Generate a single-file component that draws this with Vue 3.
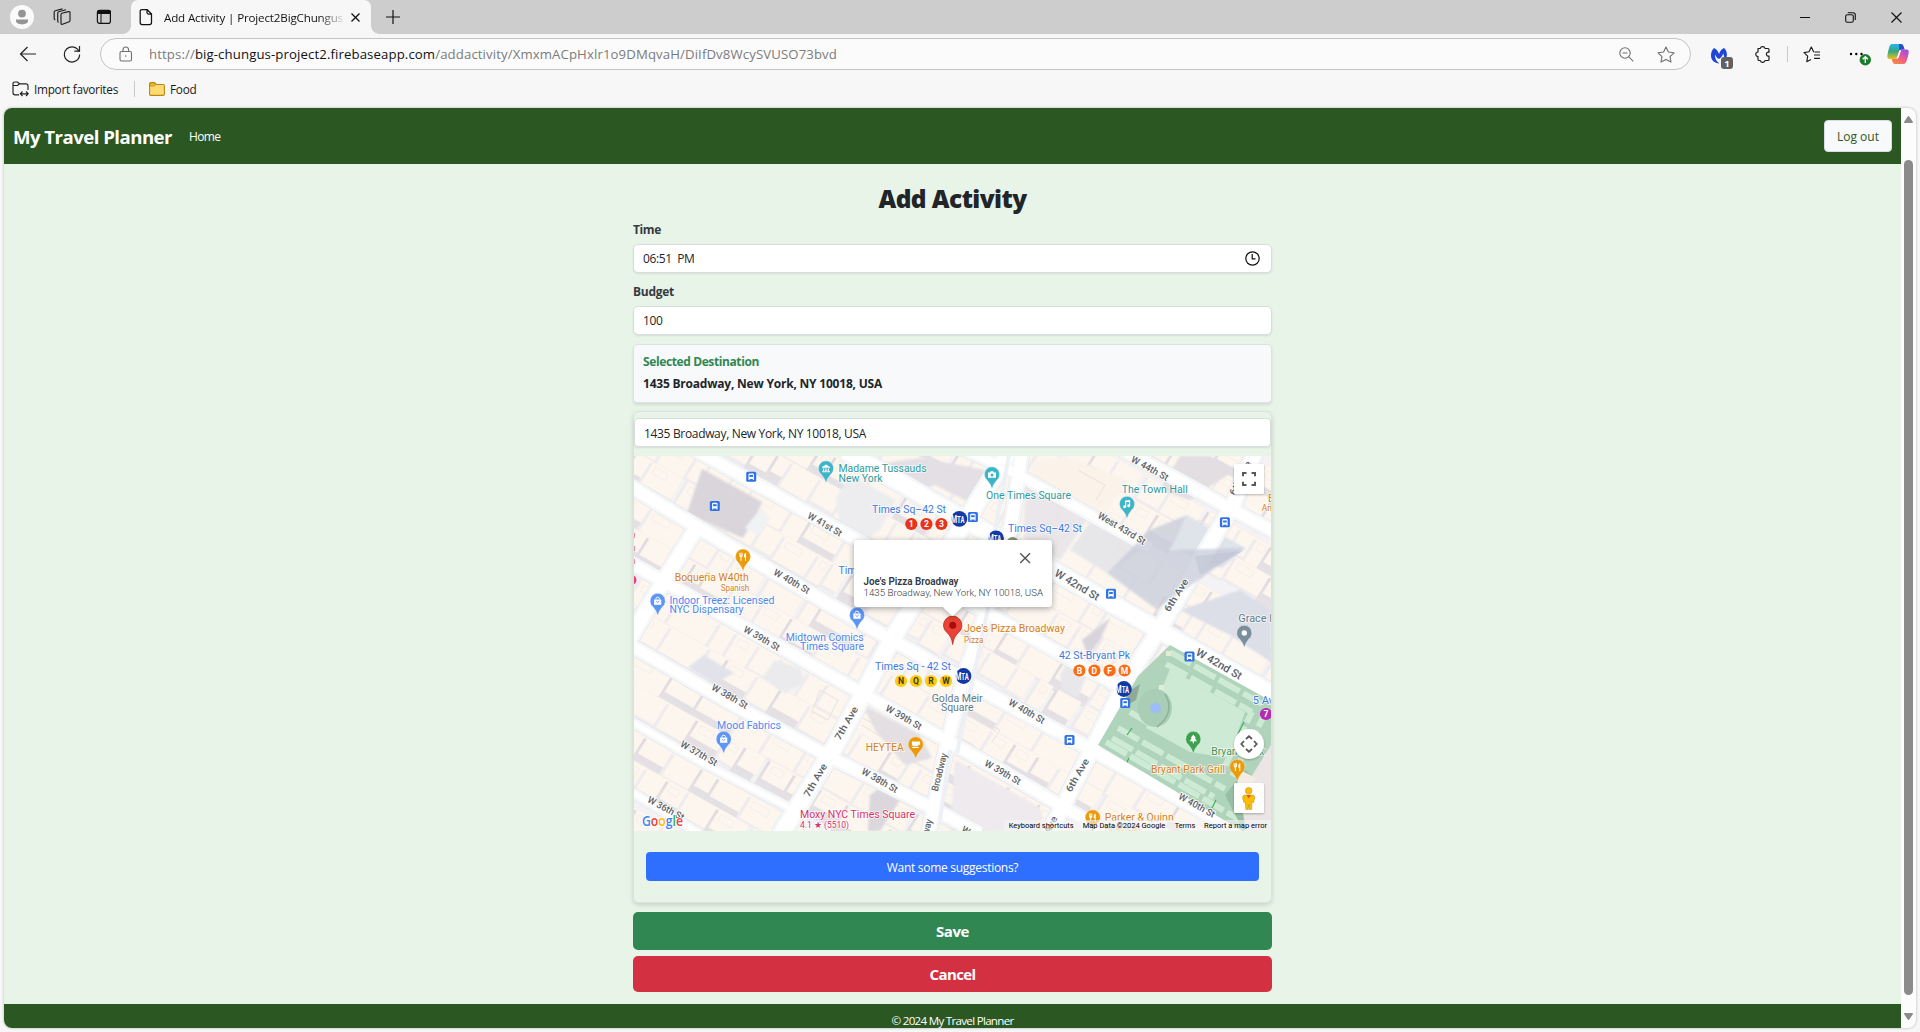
<script setup>
// Sets the tracking of a label so that it fills its design width.
const vFit = {
  mounted(el, { value }) {
    const natural = el.getBoundingClientRect().width
    el.style.letterSpacing = `${(value - natural) / el.textContent.trim().length}px`
  },
}

// Buildings are laid out in street coordinates: u along the streets, v across them.
let seed = 11
const rnd = () => {
  seed = (seed * 16807) % 2147483647
  return seed / 2147483647
}
const buildings = []
for (let strip = -5; strip < 7; strip++) {
  for (let row = 0; row < 2; row++) {
    let u = -60
    while (u < 760) {
      const w = 14 + rnd() * 34
      const h = 24 + rnd() * 4
      buildings.push({ u, v: strip * 67.5 + 8 + row * 27, w, h, tall: rnd() > 0.68, roof: rnd() > 0.55 })
      u += w + (rnd() > 0.85 ? 6 : 0)
    }
  }
}

const roads = [
  { d: 'M690 447L857 540L1120 687', w: 10 },
  { d: 'M625 483L697 527L830 605L967 682L1092 750L1240 832', w: 11 },
  { d: 'M625 560L762 637L860 692L1003 772L1110 834', w: 10 },
  { d: 'M625 642L730 703L830 757L930 807L980 834', w: 10 },
  { d: 'M625 718L699 761L790 808', w: 5 },
  { d: 'M625 788L700 834', w: 5 },
  { d: 'M845 451L1077 584L1290 704', w: 15 },
  { d: 'M960 448L1010 470L1150 548', w: 8 },
  { d: 'M1120 448L1233 510L1290 540', w: 10 },
  { d: 'M697 527L660 587L620 655', w: 13 },
  { d: 'M780 836L837 743L893 637L960 530L1010 450', w: 15 },
  { d: 'M928 836L948 740L966 670L990 600L1012 520L1022 450', w: 11 },
  { d: 'M1048 836L1093 747L1125 683L1167 617L1233 505L1256 450', w: 13 },
]

const streetNames = [
  ['W 41st St', 825, 524, 38, 30], ['W 40th St', 792, 581, 40, 30], ['W 39th St', 762, 638, 40, 30],
  ['W 38th St', 730, 696, 40, 30], ['W 37th St', 699, 753, 41, 30], ['W 36th St', 666, 808, 40, 28],
  ['W 39th St', 904, 717, 40, 30], ['W 38th St', 880, 780, 40, 30], ['W 40th St', 1027, 711, 40, 30],
  ['W 39th St', 1003, 772, 40, 30], ['W 40th St', 1197, 805, 40, 29], ['W 44th St', 1150, 468, 41, 29],
  ['West 43rd St', 1122, 528, 54, 31], ['W 42nd St', 1077, 585, 50, 31], ['W 42nd St', 1219, 664, 51, 30],
  ['7th Ave', 846, 723, 37, -60], ['7th Ave', 815, 780, 37, -60], ['Broadway', 939, 772, 39, -76],
  ['6th Ave', 1176, 595, 37, -58], ['6th Ave', 1077, 775, 37, -60], ['W 38th St', 980, 838, 40, 30],
  ['6th Ave', 1240, 478, 37, -63], ['7th Ave', 1046, 833, 37, -62], ['Broadway', 924, 838, 39, -76],
]

const places = [
  ['Madame Tussauds', 838.5, 471.7, 88, '#2e9aa0'], ['New York', 838.5, 482, 44, '#2e9aa0'],
  ['One Times Square', 986, 498.5, 85, '#2e9aa0'], ['The Town Hall', 1121.7, 493, 66, '#2e9aa0'],
  ['Times Sq–42 St', 872, 512.7, 74, '#3f79e0'], ['Times Sq–42 St', 1008, 532.3, 74, '#3f79e0'],
  ['Times Sq–42 St', 838.5, 573.8, 74, '#3f79e0'], ['Times Sq - 42 St', 875, 669.7, 76, '#3f79e0'],
  ['42 St-Bryant Pk', 1059, 659, 71, '#3f79e0'], ['5 Ave', 1252.7, 703.5, 27, '#3f79e0'],
  ['Boqueria W40th', 674.7, 581, 74, '#d68017'], ['Spanish', 720.7, 590.8, 28.5, '#d68017', 8.5],
  ['Indoor Treez: Licensed', 669.5, 603.7, 105, '#4f87ee'], ['NYC Dispensary', 669.5, 612.7, 74, '#4f87ee'],
  ['Midtown Comics', 785.7, 640.7, 78, '#4f87ee'], ['Times Square', 800, 649.5, 64, '#4f87ee'],
  ["Joe's Pizza Broadway", 964, 632, 101, '#d68017'], ['Pizza', 964, 643, 19.5, '#d68017', 8.5],
  ['Golda Meir', 931.7, 702, 51, '#5f7a88'], ['Square', 941, 711, 32.5, '#5f7a88'],
  ['Grace Building', 1238.3, 621.5, 70, '#5f7a88'], ['Bryant Park', 1211.3, 754.5, 53, '#3f9155'],
  ['Bryant Park Grill', 1151, 773, 74, '#d68017'], ['Parker & Quinn', 1104.7, 821, 69, '#d68017'],
  ['American', 1104.7, 831, 36, '#dfa764', 8.5], ['HEYTEA', 865.7, 751.3, 38, '#d68017'],
  ['Mood Fabrics', 717, 728.7, 64, '#4f87ee'], ['Moxy NYC Times Square', 800, 817.5, 115, '#d6336c'],
  ['4.1 ★ (5510)', 800, 828.3, 49, '#d6336c', 8.5], ['Bar', 1268, 502, 16, '#d68017'], ['American', 1261.7, 511, 36, '#d68017', 8.5],
]

const pins = [
  [826, 468.5, '#3db4c8', 'museum'], [992, 474.5, '#3db4c8', 'camera'], [1127, 504, '#3db4c8', 'music'],
  [743, 556.7, '#eb9a0a', 'fork'], [657.7, 601, '#5c94f7', 'bag'], [857, 615, '#5c94f7', 'bag'],
  [1244.3, 633, '#7a8f9c', 'dot'], [1193.3, 739, '#3da14e', 'tree'], [1237.3, 767, '#eb9a0a', 'fork'],
  [1092.7, 817.5, '#eb9a0a', 'fork'], [915.7, 744.5, '#eb9a0a', 'cup'], [723.7, 739, '#5c94f7', 'bag'],
]

const bullets = [
  ['1', 911.3, 524, '#e8321c', '#fff'], ['2', 926.4, 524, '#e8321c', '#fff'], ['3', 941.4, 524, '#e8321c', '#fff'],
  ['N', 901, 681, '#fccc0a', '#3d3a1c'], ['Q', 916, 681, '#fccc0a', '#3d3a1c'], ['R', 931, 681, '#fccc0a', '#3d3a1c'], ['W', 946, 681, '#fccc0a', '#3d3a1c'],
  ['B', 1079.4, 670.5, '#ff6a13', '#fff'], ['D', 1094.4, 670.5, '#ff6a13', '#fff'], ['F', 1109.6, 670.5, '#ff6a13', '#fff'], ['M', 1124.6, 670.5, '#ff6a13', '#fff'],
  ['7', 1266, 714, '#b52ab5', '#fff'],
]
const buses = [[751.2, 476.7], [714.8, 506], [972.9, 517], [1224.9, 522.3], [1111, 593.8], [1189.5, 656.5], [1125.2, 703], [1069.5, 740]]
const mtas = [[959.3, 518.9], [996, 538.3], [963.5, 676], [1123.9, 689]]
const credits = [['Keyboard shortcuts', 1008.7, 65], ['Map Data ©2024 Google', 1082.7, 82.5], ['Terms', 1174.7, 20.5], ['Report a map error', 1204, 63]]
</script>

<template>
  <div class="browser">
    <div class="tabbar">
      <div class="tools">
        <svg width="24" height="24" viewBox="0 0 24 24"><circle cx="12" cy="12" r="12" fill="#fafafa" /><circle cx="12" cy="8.6" r="3.9" fill="#949494" /><path d="M6 14.5h12v1.6c0 4.4-12 4.4-12 0z" fill="#949494" /></svg>
        <svg width="18" height="18" viewBox="0 0 18 18" fill="none" stroke="#1c1c1c" stroke-width="1.15" stroke-linejoin="round"><path d="M8 6.5Q8 5.6 8.8 5.3L15.5 3.6Q17 3.3 17 4.8V12.6Q17 13.4 16.2 13.7L9.5 16.3Q8 16.7 8 15.3ZM5.6 14.4Q4.7 14.2 4.7 13V5Q4.7 4 5.6 3.7L13 1.7M2.3 12Q1.2 11.8 1.2 10.6V4Q1.2 3 2.2 2.7L9.5.9" /></svg>
        <svg width="16" height="16" viewBox="0 0 16 16"><rect x="1.4" y="1.4" width="13" height="13" rx="2.2" fill="none" stroke="#111" stroke-width="1.2" /><path d="M1 5V3Q1 1 3 1H13Q15 1 15 3V5Z" fill="#111" /><path d="M5 5V14" stroke="#111" stroke-width="1" /></svg>
      </div>
      <div class="tab">
        <svg width="14" height="18" viewBox="0 0 14 18" fill="none" stroke="#111" stroke-width="1.25" stroke-linejoin="round"><path d="M3 1.5H8L12.5 6V14.5Q12.5 16.5 10.5 16.5H3Q1.2 16.5 1.2 14.5V3.3Q1.2 1.5 3 1.5ZM8 1.5V4.5Q8 6 9.5 6H12.5" /></svg>
        <span class="tab-title"><span v-fit="179">Add Activity | Project2BigChungus</span></span>
        <svg width="9" height="9" viewBox="0 0 9 9" stroke="#111" stroke-width="1.3"><path d="M.5.5L8.5 8.5M8.5.5L.5 8.5" /></svg>
      </div>
      <svg class="plus" width="14" height="14" viewBox="0 0 14 14" stroke="#111" stroke-width="1.2"><path d="M7 0V14M0 7H14" /></svg>
      <div class="window-buttons">
        <svg width="10" height="10" viewBox="0 0 10 10" stroke="#111"><path d="M0 5.5H10" /></svg>
        <svg width="11" height="11" viewBox="0 0 11 11" fill="none" stroke="#111" stroke-width="1.1"><rect x=".7" y="2.7" width="7.6" height="7.6" rx="1.5" /><path d="M2.8.7H8Q10.3.7 10.3 3V8" /></svg>
        <svg width="11" height="11" viewBox="0 0 11 11" stroke="#111" stroke-width="1.15"><path d="M.5.5L10.5 10.5M10.5.5L.5 10.5" /></svg>
      </div>
    </div>

    <div class="toolbar">
      <svg class="back" width="18" height="16" viewBox="0 0 18 16" fill="none" stroke="#222" stroke-width="1.2"><path d="M8.5 1L1.5 8L8.5 15M1.5 8H17" /></svg>
      <svg class="reload" width="18" height="18" viewBox="0 0 18 18" fill="none" stroke="#222" stroke-width="1.2"><path d="M16.2 7A7.6 7.6 0 1 0 16.6 9.5M16.5 1V6.2H11.3" /></svg>
      <div class="address">
        <svg width="14" height="16" viewBox="0 0 14 16" fill="none" stroke="#707070" stroke-width="1.1"><rect x="1" y="5.5" width="11.5" height="9.5" rx="1.6" /><path d="M4 5.5V4Q4 1 6.8 1T9.6 4V5.5" /><circle cx="6.8" cy="10" r=".8" fill="#707070" stroke="none" /></svg>
        <span v-fit="688" class="url">https://<b>big-chungus-project2.firebaseapp.com</b>/addactivity/XmxmACpHxlr1o9DMqvaH/DiIfDv8WcySVUSO73bvd</span>
        <svg class="zoomout" width="15" height="15" viewBox="0 0 15 15" fill="none" stroke="#707070" stroke-width="1.1"><circle cx="6" cy="6" r="5.2" /><path d="M3.5 6H8.5M9.8 9.8L14.3 14.3" /></svg>
        <svg width="18" height="17" viewBox="0 0 18 17" fill="none" stroke="#707070" stroke-width="1.1" stroke-linejoin="round"><path d="M9 1L11.4 6L17 6.8L13 10.6L14 16L9 13.4L4 16L5 10.6L1 6.8L6.6 6Z" /></svg>
      </div>
      <svg class="malware" width="24" height="24" viewBox="0 0 24 24"><path d="M4 3C6.4 4 8 6.3 9 9C10 6.3 11.6 4 14 3C17 5.5 17.8 10 16 13.5L14 16.5C14.4 13 14 10.3 13.2 8.6C12.4 11 11 13 9 14C7 13 5.6 11 5 9.2C4.8 13 6 16 9.3 18.4C4.5 18.4 1 15 1 10.5C1 7.5 2 4.8 4 3Z" fill="#1e45d8" /><rect x="11" y="12" width="12" height="12" rx="3" fill="#616161" /><text x="17" y="21.5" text-anchor="middle" font-size="9.5" font-weight="700" fill="#fff">1</text></svg>
      <svg class="puzzle" width="16" height="18" viewBox="0 0 16 18" fill="none" stroke="#1c1c1c" stroke-width="1.2" stroke-linejoin="round"><path d="M3 3.5H5.3A2.4 2.4 0 0 1 10 3.5H13Q14 3.5 14 4.5V7.2A2 2 0 1 0 14 11V14.5Q14 15.5 13 15.5H10A2.4 2.4 0 0 1 5.3 15.5H4Q3 15.5 3 14.5V11.5A2.2 2.2 0 0 1 3 7Z" /></svg>
      <i class="bar"></i>
      <svg class="favs" width="18" height="17" viewBox="0 0 18 17" fill="none" stroke="#1c1c1c" stroke-width="1.15" stroke-linejoin="round"><path d="M11.6 6L10.6 5.8L8.3 1L6 5.8L1 6.6L4.7 10.2L3.8 15.7L8 13.5M11 9H17M11 12.3H17M12 6H17" /></svg>
      <svg class="more" width="22" height="20" viewBox="0 0 22 20"><circle cx="2" cy="8" r="1.2" /><circle cx="7.3" cy="8" r="1.2" /><circle cx="12.5" cy="8" r="1.2" /><circle cx="16.3" cy="13.8" r="5.7" fill="#1d7a2e" /><path d="M16.3 17V11M13.7 13.3L16.3 10.7L18.9 13.3" stroke="#fff" fill="none" stroke-width="1.3" /></svg>
      <svg class="copilot" width="22" height="20" viewBox="0 0 22 20">
        <defs>
          <linearGradient id="cpa" x1="0" y1="0" x2="0" y2="1"><stop stop-color="#28b4f0" /><stop offset=".5" stop-color="#3aa77c" /><stop offset="1" stop-color="#e8c11d" /></linearGradient>
          <linearGradient id="cpb" x1=".8" y1="0" x2=".2" y2="1"><stop stop-color="#a04be8" /><stop offset=".5" stop-color="#ea5a93" /><stop offset="1" stop-color="#fb8a3c" /></linearGradient>
        </defs>
        <path d="M5 0H14Q16 0 16.8 3L17.5 5.5H14.5Q12.6 5.5 12 7.5L10 13.5Q9.3 15 7.5 15H2.5Q0 15 .4 11.5Q1 7 2.5 2.3Q3.3 0 5 0Z" fill="url(#cpa)" />
        <path d="M12 0H14Q16 0 16.8 3L17.5 5.5H14.5L12.3 6.5Z" fill="#2450c8" />
        <path d="M14.5 5.5H19.5Q22 5.5 21.7 8.5Q21 13.5 19.3 17.7Q18.3 20 16.5 20H8Q6 20 5.4 17.5L4.7 15H7.5Q9.3 15 10 13.5L12 7.5Q12.6 5.5 14.5 5.5Z" fill="url(#cpb)" />
        <path d="M12.6 6.3H14.2L11.6 13.6Q11 15 9.4 15.2L10.4 12.6Z" fill="#fff" />
      </svg>
    </div>

    <div class="favorites">
      <svg width="17" height="16" viewBox="0 0 17 16" fill="none" stroke="#222" stroke-width="1.15"><path d="M7 13.8H3Q1 13.8 1 11.8V3Q1 1 3 1H5.5L7.5 2.8H14Q16 2.8 16 4.8V9M1 4.5H5.5L7.5 2.8M8.5 12.8H16M10.5 10.5L8.3 12.8L10.5 15M14 10.5L16.2 12.8L14 15" /></svg>
      <span v-fit="84" class="fav">Import favorites</span>
      <i class="bar"></i>
      <svg width="16" height="14" viewBox="0 0 16 14"><path d="M.6 2Q.6.6 2 .6H5.5L7.3 2.5H14Q15.4 2.5 15.4 4V12Q15.4 13.4 14 13.4H2Q.6 13.4.6 12Z" fill="#ffdc73" stroke="#b98712" stroke-width="1.1" /><path d="M1 1H5.5L7 2.6L5.5 4H1Z" fill="#f2bd2b" stroke="#b98712" stroke-width=".7" /></svg>
      <span v-fit="26.5" class="fav">Food</span>
    </div>

    <div class="page">
      <div class="site">
        <header>
          <span v-fit="159" class="brand">My Travel Planner</span>
          <span v-fit="31.5" class="home">Home</span>
          <button class="logout"><span v-fit="42">Log out</span></button>
        </header>

        <main>
          <h1><span v-fit="148">Add Activity</span></h1>
          <label><span v-fit="28">Time</span></label>
          <div class="field">
            <span v-fit="51.5">06:51 &nbsp;PM</span>
            <svg width="15" height="15" viewBox="0 0 15 15" fill="none" stroke="#111" stroke-width="1.2"><circle cx="7.5" cy="7.5" r="6.7" /><path d="M7.2 3V7.8H10.5" /></svg>
          </div>
          <label class="second"><span v-fit="41">Budget</span></label>
          <div class="field"><span v-fit="19.5">100</span></div>

          <section class="selected">
            <p class="green"><span v-fit="116">Selected Destination</span></p>
            <p><span v-fit="239">1435 Broadway, New York, NY 10018, USA</span></p>
          </section>

          <section class="mapcard">
            <div class="field search"><span v-fit="222">1435 Broadway, New York, NY 10018, USA</span></div>
            <svg class="map" viewBox="634 456 637 375" width="637" height="375">
              <defs>
                <filter id="popshadow" x="-10%" y="-15%" width="120%" height="140%"><feDropShadow dx="0" dy="1.5" stdDeviation="3" flood-opacity=".35" /></filter>
                <filter id="btnshadow" x="-20%" y="-20%" width="140%" height="140%"><feDropShadow dx="0" dy="1" stdDeviation="1.2" flood-opacity=".28" /></filter>
                <filter id="soft"><feGaussianBlur stdDeviation=".8" /></filter>
                <linearGradient id="side" x1="0" y1="0" x2="0" y2="1"><stop stop-color="#dedade" /><stop offset="1" stop-color="#e6e2e6" /></linearGradient>
                <clipPath id="parkclip"><path d="M1170 645L1271 701V745L1244 832L1098 745L1138 676Z" /></clipPath>
              </defs>
              <rect x="634" y="456" width="637" height="375" fill="#f4f2f4" />
              <g transform="matrix(.871 .49 -.53 .85 634 488)">
                <g v-for="(b, i) in buildings" :key="i">
                  <rect :x="b.u - 3" :y="b.v + 2" :width="b.w + 1" :height="b.h + (b.tall ? 4 : 1)" :fill="b.tall ? 'url(#side)' : '#efecef'" />
                  <rect :x="b.u" :y="b.v" :width="b.w" :height="b.h - (b.tall ? 6 : 0)" fill="#fcf6ef" stroke="#f6f0ea" stroke-width=".6" />
                  <rect v-if="b.roof" :x="b.u + 4" :y="b.v + 4" :width="b.w * .45" height="7" fill="none" stroke="#f3ede8" stroke-width=".8" />
                </g>
              </g>

              <g filter="url(#soft)">
                <path d="M702 469L762 502L756 516L743 538L687 513Z" fill="#d9d5da" />
                <path d="M761 508L770 519L757 535L745 528Z" fill="#f1f2f3" />
                <path d="M836 498L850 475L896 500L880 530L860 545L840 530Z" fill="#ededf0" />
                <path d="M870 465L920 458L985 470L975 505L935 485L905 495Z" fill="#e3dfe4" />
                <path d="M1034 462L1065 456L1128 480L1105 515L1060 545L1020 520Z" fill="#fbf3ea" />
                <path d="M1025 480L1060 500L1090 515L1060 560L1024 538Z" fill="#eae6ea" />
                <path d="M1096 514L1150 545L1107 573L1070 550Z" fill="#e7e7ea" />
                <path d="M1187 515L1245 548L1222 568L1168 548Z" fill="#dfe3ea" />
                <path d="M1190 500L1235 470L1210 456H1180L1160 490Z" fill="#e2dee2" />
                <path d="M1082 640L1110 618L1100 640L1088 656Z" fill="#d8d4db" />
                <path d="M1180 610L1230 635L1271 662V610L1240 590Z" fill="#dcdee8" />
                <path d="M688 667L704 655L734 673L715 684Z" fill="#e2e3ea" />
                <path d="M762 678L775 660L800 668L805 682L785 694Z" fill="#ebebed" />
                <path d="M863 705L920 735L932 758L905 765L875 730Z" fill="#e3dfe2" />
                <path d="M1060 675L1070 655L1090 667L1078 698L1062 690Z" fill="#e8e8eb" />
                <path d="M870 795L880 788L900 800L880 831H868Z" fill="#dbd7dc" />
                <path d="M955 760L1000 785L1040 808L1045 831H950Z" fill="#eeeaed" />
              </g>
              <g fill="none" stroke="#e9e2df" stroke-width="1">
                <path d="M865 712L925 745M863 718L918 750M862 725L905 752M820 690L838 700L828 720L812 712ZM1078 470L1105 485L1096 500M1048 500L1062 508L1055 520M1110 530L1122 537L1118 547L1128 552M1180 530L1200 520L1215 530M955 735L975 746L965 760M985 722L1000 730L992 742M1200 470L1218 480L1208 496" />
              </g>

              <g fill="none" stroke-linejoin="round">
                <path v-for="(r, i) in roads" :key="i" :d="r.d" :stroke-width="r.w + 6.5" stroke="#e3e5e9" />
                <path v-for="(r, i) in roads" :key="i" :d="r.d" :stroke-width="r.w + 5.3" stroke="#f6f7f9" />
                <path v-for="(r, i) in roads" :key="i" :d="r.d" :stroke-width="r.w" stroke="#fff" />
              </g>
              <path d="M1010 450L993 540M957 753L990 600M940 820L950 750" stroke="#edf0f4" stroke-width="4" fill="none" />
              <path d="M1150 530L1187 515L1170 550L1245 548L1156 609L1107 573Z" fill="#c6cad9" opacity=".72" filter="url(#soft)" />
              <path d="M1195 556L1243 551L1200 575Z" fill="#bcc1d3" opacity=".5" />

              <path d="M1170 645L1271 701V745L1244 832L1098 745L1138 676Z" fill="#b0d3bb" />
              <g clip-path="url(#parkclip)">
                <path d="M1170 669L1245 712L1228 758L1190 752L1146 728Z" fill="#cdead4" />
                <g fill="none" stroke="#cdead4" stroke-width="6">
                  <path d="M1170 652L1262 704M1166 664L1252 712M1118 728L1225 789M1112 738L1214 797M1130 712L1150 724M1106 742L1240 820" stroke-dasharray="24 4" />
                  <path d="M1252 712L1222 772M1264 716L1232 776" stroke-dasharray="12 4" />
                </g>
                <ellipse cx="1155" cy="708" rx="17" ry="19" fill="#a9cdb5" />
                <path d="M1165 694Q1176 712 1157 727" fill="none" stroke="#8fb29d" stroke-width="1.6" />
                <circle cx="1155.5" cy="708" r="5.3" fill="#9dbdf8" />
                <path d="M1128 692L1140 684L1136 700L1126 706Z" fill="#90aa9a" />
                <path d="M1127 735L1132 728M1238 734L1244 722M1126 764L1129 758M1212 808L1216 800" stroke="#3fae56" stroke-width="1.2" />
                <path d="M1225 795L1245 770L1262 785L1244 832Z" fill="#98bfa4" />
                <rect x="1166" y="651" width="5" height="5" fill="#e4ecd2" /><rect x="1159" y="685" width="5" height="5" fill="#e4ecd2" />
              </g>
              <path d="M1240 795L1271 745V831H1246Z" fill="#ebe6e5" />
              <path d="M1240 770L1256 778L1248 795L1236 790Z" fill="#f2ece2" />

              <g class="street" text-anchor="middle">
                <text v-for="(s, i) in streetNames" :key="i" :transform="`translate(${s[1]} ${s[2]}) rotate(${s[4]})`" y="3.6" :textLength="s[3]" lengthAdjust="spacingAndGlyphs" :class="{ big: s[3] > 48 && s[0] !== 'West 43rd St' }">{{ s[0] }}</text>
              </g>

              <g v-for="(b, i) in buses" :key="i" :transform="`translate(${b[0]} ${b[1]})`">
                <rect x="-5" y="-5" width="10" height="10" rx="1.5" fill="#2f72e6" />
                <path d="M-2.7 3.4V-2.2Q-2.7-3.2-1.7-3.2H1.7Q2.7-3.2 2.7-2.2V3.4H1.6V2.4H-1.6V3.4Z" fill="#fff" />
                <path d="M-1.8-1.8H1.8V.2H-1.8Z" fill="#2f72e6" />
              </g>
              <circle cx="1012.7" cy="543" r="6" fill="#8b9168" />
              <circle cx="631.5" cy="580" r="5" fill="#e8407c" />
              <path d="M634.5 533V565" stroke="#f08aad" stroke-width="1" stroke-dasharray="5 8" />
              <g v-for="(m, i) in mtas" :key="i" :transform="`translate(${m[0]} ${m[1]})`">
                <circle r="7.9" fill="#1239a6" />
                <text x="-1.6" y="4" text-anchor="middle" class="mta" textLength="13.5" lengthAdjust="spacingAndGlyphs">M<tspan font-size="9.5">TA</tspan></text>
              </g>
              <g v-for="(b, i) in bullets" :key="i">
                <circle :cx="b[1]" :cy="b[2]" r="6.1" :fill="b[3]" />
                <text :x="b[1]" :y="b[2] + 3.1" text-anchor="middle" :fill="b[4]" class="bullet">{{ b[0] }}</text>
              </g>

              <g v-for="(p, i) in pins" :key="i" :transform="`translate(${p[0]} ${p[1]})`">
                <path d="M0 14.5Q-1 10-4.6 6A7.6 7.6 0 1 1 4.6 6Q1 10 0 14.5Z" :fill="p[2]" stroke="#fff" stroke-opacity=".6" stroke-width=".6" />
                <path v-if="p[3] === 'museum'" d="M-4-1.5L0-4L4-1.5V-.7H-4ZM-3 0H-1.8V2.5H-3ZM-.6 0H.6V2.5H-.6ZM1.8 0H3V2.5H1.8ZM-4 2.7H4V3.7H-4Z" fill="#fff" />
                <g v-else-if="p[3] === 'camera'"><path d="M-4-2H-2L-1.3-3.3H1.3L2-2H4V3.2H-4Z" fill="#fff" /><circle cy=".6" r="1.5" :fill="p[2]" /></g>
                <path v-else-if="p[3] === 'music'" d="M-2-3.4L3.2-4V1.6A1.5 1.5 0 1 1 1.9.3V-2L-.8-1.7V2.5A1.5 1.5 0 1 1-2 1.2Z" fill="#fff" />
                <path v-else-if="p[3] === 'fork'" d="M-3.6-4V-1Q-3.6.2-2.5.4V4H-1.5V.4Q-.4.2-.4-1V-4H-1.2V-1.2H-1.6V-4H-2.4V-1.2H-2.8V-4ZM1 .6H2V4H3V-4Q1-3.4 1-1Z" fill="#fff" />
                <g v-else-if="p[3] === 'bag'"><path d="M-3.6-1.5H3.6V3.8H-3.6Z" fill="#fff" /><path d="M-1.8-1.5V-2.2Q-1.8-3.8 0-3.8T1.8-2.2V-1.5" fill="none" stroke="#fff" stroke-width="1" /><path d="M-1.6.2Q0 2.8 1.6.2" fill="none" :stroke="p[2]" stroke-width=".9" /></g>
                <circle v-else-if="p[3] === 'dot'" r="2.7" fill="#fff" />
                <path v-else-if="p[3] === 'tree'" d="M0-4.6L2.6-1H1.6L3.6 2.2H.6V4.3H-.6V2.2H-3.6L-1.6-1H-2.6Z" fill="#fff" />
                <path v-else d="M-3.8-3H4.4V.2H2.8Q2.4 1.8 1 1.8H-1.6Q-3.8 1.8-3.8-.2ZM-3.8 2.6H3V3.5H-3.8Z" fill="#fff" />
              </g>

              <g class="place">
                <text v-for="(p, i) in places" :key="i" :x="p[1]" :y="p[2]" :textLength="p[3]" lengthAdjust="spacingAndGlyphs" :fill="p[4]" :font-size="p[5] || 10.6">{{ p[0] }}</text>
              </g>

              <path d="M952.7 644.5Q952 637 947 632.5A9.2 9.2 0 1 1 958.4 632.5Q953.4 637 952.7 644.5Z" fill="#ea4335" stroke="#b8281c" stroke-width=".8" />
              <circle cx="952.7" cy="625.3" r="3.5" fill="#a50e0e" />

              <path d="M858 540H1048Q1052 540 1052 544V603Q1052 607 1048 607H962L952.5 616L943 607H858Q854 607 854 603V544Q854 540 858 540Z" fill="#fff" filter="url(#popshadow)" />
              <path d="M1020.2 553.2L1030 563M1030 553.2L1020.2 563" stroke="#555" stroke-width="1.4" />
              <text x="863.5" y="584.7" class="poptitle" textLength="95" lengthAdjust="spacingAndGlyphs">Joe's Pizza Broadway</text>
              <text x="863.5" y="596" class="popaddr" textLength="179.5" lengthAdjust="spacingAndGlyphs">1435 Broadway, New York, NY 10018, USA</text>

              <rect x="1234" y="464" width="30" height="30" rx="1.5" fill="#fff" filter="url(#btnshadow)" />
              <path d="M1243 476.3V473H1246.5M1251.5 473H1255V476.3M1255 481.7V485H1251.5M1246.5 485H1243V481.7" fill="none" stroke="#5a5a5a" stroke-width="2" />
              <circle cx="1249" cy="744" r="15" fill="#fff" filter="url(#btnshadow)" />
              <path d="M1246 739L1249 736.3L1252 739M1246 749L1249 751.7L1252 749M1244 741L1241.3 744L1244 747M1254 741L1256.7 744L1254 747" fill="none" stroke="#5a5a5a" stroke-width="1.8" />
              <rect x="1234" y="783" width="30" height="30" rx="1.5" fill="#fff" filter="url(#btnshadow)" />
              <circle cx="1248.7" cy="790.8" r="3.3" fill="#fbbc04" stroke="#c48a13" stroke-width=".5" />
              <path d="M1244.2 795H1253.3Q1255 795.5 1254.7 798L1253.5 802.5L1252 802L1251.6 809.5H1249.2L1248.7 804.5L1248.2 809.5H1245.8L1245.4 802L1243.8 802.5L1242.6 798Q1242.5 795.5 1244.2 795Z" fill="#fbbc04" stroke="#c48a13" stroke-width=".5" />
              <path d="M1246.5 795L1248.7 798.5L1251 795Z" fill="#e4572e" />

              <text x="642" y="826" class="google" textLength="41" lengthAdjust="spacingAndGlyphs"><tspan fill="#4285f4">G</tspan><tspan fill="#ea4335">o</tspan><tspan fill="#fbbc04">o</tspan><tspan fill="#4285f4">g</tspan><tspan fill="#34a853">l</tspan><tspan fill="#ea4335">e</tspan></text>
              <rect x="1004" y="820" width="267" height="11" fill="#f5f5f5" opacity=".6" />
              <text v-for="c in credits" :key="c[0]" :x="c[1]" y="828" :textLength="c[2]" lengthAdjust="spacingAndGlyphs" class="credit">{{ c[0] }}</text>
            </svg>
            <button class="suggest"><span v-fit="131.5">Want some suggestions?</span></button>
          </section>

          <button class="big-button save"><span v-fit="33">Save</span></button>
          <button class="big-button cancel"><span v-fit="46">Cancel</span></button>
        </main>

        <footer><span v-fit="122">© 2024 My Travel Planner</span></footer>
      </div>
      <div class="scrollbar">
        <svg width="9" height="7" viewBox="0 0 9 7"><path d="M4.5 0Q5 0 5.5.8L9 6Q9 7 8 7H1Q0 7 0 6L3.5.8Q4 0 4.5 0Z" fill="#8b8b8b" /></svg>
        <div class="thumb"></div>
        <svg width="9" height="7" viewBox="0 0 9 7"><path d="M4.5 7Q5 7 5.5 6.2L9 1Q9 0 8 0H1Q0 0 0 1L3.5 6.2Q4 7 4.5 7Z" fill="#8b8b8b" /></svg>
      </div>
    </div>
  </div>
</template>

<style>
body { margin: 0; overflow: hidden; }
</style>

<style scoped>
* { box-sizing: border-box; }
.browser {
  width: 1920px; height: 1032px; background: #f7f7f7; display: flex; flex-direction: column;
  font-family: "Open Sans", "Noto Sans", sans-serif; font-size: 12px; color: #212529; overflow: hidden; white-space: nowrap;
}
svg { display: block; flex: none; }
button { font: inherit; border: 0; padding: 0; }
.tabbar { height: 34px; flex: none; background: #cdcdcd; display: flex; align-items: center; }
.tools { width: 131px; display: flex; align-items: center; padding-left: 10px; gap: 19px; flex: none; }
.tools svg:last-child { margin-left: 6px; }
.tab { width: 240px; height: 34px; background: #f7f7f7; border-radius: 7px 7px 0 0; display: flex; align-items: center; padding-left: 8px; flex: none; position: relative; }
.tab::before, .tab::after { content: ""; position: absolute; bottom: 0; width: 8px; height: 8px; }
.tab::before { left: -8px; background: radial-gradient(circle at 0 0, transparent 7.5px, #f7f7f7 8px); }
.tab::after { right: -8px; background: radial-gradient(circle at 100% 0, transparent 7.5px, #f7f7f7 8px); }
.tab-title { margin-left: 11px; width: 179px; margin-right: 8px; font-size: 11.6px; color: #111; overflow: hidden; -webkit-mask-image: linear-gradient(90deg, #000 155px, transparent 182px); mask-image: linear-gradient(90deg, #000 155px, transparent 182px); }
.plus { margin-left: 15px; }
.window-buttons { margin-left: auto; display: flex; align-items: center; gap: 35px; padding-right: 18px; }
.toolbar { height: 40px; flex: none; display: flex; align-items: center; }
.back { margin-left: 19px; }
.reload { margin-left: 26px; }
.address { margin: 0 0 0 19px; width: 1591px; height: 32px; border: 1px solid #c4c4c4; border-radius: 16px; background: #fbfbfb; display: flex; align-items: center; padding: 0 15px 0 18px; }
.url { margin-left: 16px; font-size: 13.2px; color: #7b7b7b; }
.url b { font-weight: 400; color: #111; }
.zoomout { margin-left: auto; margin-right: 23px; }
.malware { margin-left: 19px; margin-top: 6px; }
.puzzle { margin-left: 21px; }
.bar { width: 1px; height: 16px; background: #c9c9c9; flex: none; }
.toolbar .bar { margin-left: 16px; }
.favs { margin-left: 15px; }
.more { margin-left: 28px; margin-top: 3px; }
.copilot { margin-left: 16px; }
.favorites { height: 34px; flex: none; display: flex; align-items: center; padding: 0 0 4px 12px; color: #1a1a1a; }
.fav { margin-left: 5px; font-size: 11.8px; }
.favorites .bar { margin: 0 14px 0 16px; }
.page { margin-left: 4px; width: 1912px; height: 920px; border-radius: 8px; overflow: hidden; display: flex; background: #fcfcfc; box-shadow: 0 0 3px rgba(0, 0, 0, .28); }
.site { width: 1897px; background: #e8f4e8; display: flex; flex-direction: column; }
header { height: 56px; background: #2b5822; color: #fff; display: flex; align-items: center; padding: 0 9px; flex: none; }
.brand { font-size: 18.6px; font-weight: 700; }
.home { margin-left: 17px; }
.logout { margin-left: auto; width: 68px; height: 32px; border-radius: 4px; border: 1px solid #d8dde2; background: #f8f9fa; color: #2b5822; font-weight: 500; }
main { width: 639px; margin-left: 629px; height: 840px; display: flex; flex-direction: column; flex: none; }
h1 { margin: 19px 0 0; height: 31px; line-height: 32px; text-align: center; font-size: 24.5px; font-weight: 800; color: #212529; }
label { height: 20px; line-height: 20px; margin-top: 6px; margin-bottom: 4px; font-weight: 700; font-size: 12px; color: #343a40; }
label.second { margin-top: 9px; }
.field { height: 29px; flex: none; border: 1px solid #dadddd; border-radius: 5px; background: #fff; display: flex; align-items: center; justify-content: space-between; padding: 0 11px 0 9px; box-shadow: 0 1px 2px rgba(0, 0, 0, .09); }
.selected { height: 59px; flex: none; margin-top: 9px; border: 1px solid #dde2e6; border-radius: 4px; background: #f8f9fb; padding: 6px 9px; box-shadow: 0 2px 3px rgba(0, 0, 0, .09); }
.selected p { margin: 0; line-height: 22px; font-weight: 700; font-size: 12px; }
.selected .green { color: #2f8751; }
.mapcard { margin-top: 8px; height: 492px; flex: none; border: 1px solid #dbe3db; border-radius: 6px; box-shadow: 0 2px 5px rgba(0, 0, 0, .14); display: flex; flex-direction: column; padding-top: 6px; }
.search { border-radius: 4px; padding-top: 1px; }
.map { margin-top: 9px; overflow: hidden; }
.suggest { margin: 21px auto 0; width: 613px; height: 29px; border-radius: 4px; background: #2e6fff; color: #fff; flex: none; padding-top: 1px; }
.big-button { height: 38px; flex: none; margin-top: 9px; border-radius: 5px; color: #fff; font-weight: 700; font-size: 15px; background: #308752; }
.cancel { height: 36px; margin-top: 6px; background: #d33142; }
footer { background: #2b5822; color: #fff; height: 24px; display: flex; justify-content: center; align-items: center; padding-top: 8px; font-size: 11.6px; }
.scrollbar { width: 15px; display: flex; flex-direction: column; align-items: center; padding: 8px 0; gap: 37px; }
.thumb { width: 9px; flex: 1; background: #8b8b8b; border-radius: 5px; margin-bottom: -19px; }
.map text { font-family: Roboto, sans-serif; }
.street text { font-size: 9.6px; font-weight: 500; fill: #5c6166; stroke: #fff; stroke-width: 1.6px; paint-order: stroke; }
.street .big { font-size: 11px; }
.place text { stroke: #fff; stroke-opacity: .8; stroke-width: 1.6px; paint-order: stroke; }
.map .bullet { font-size: 8.6px; font-weight: 700; }
.map .mta { font-size: 11px; font-weight: 700; fill: #fff; }
.map .poptitle { font-size: 10px; font-weight: 600; fill: #333a44; }
.map .popaddr { font-size: 9.8px; font-weight: 300; fill: #333a44; }
.map .google { font-family: "Open Sans", sans-serif; font-size: 14.5px; font-weight: 600; stroke: #fff; stroke-width: 1.5px; paint-order: stroke; }
.map .credit { font-size: 8px; fill: #000; }
</style>
